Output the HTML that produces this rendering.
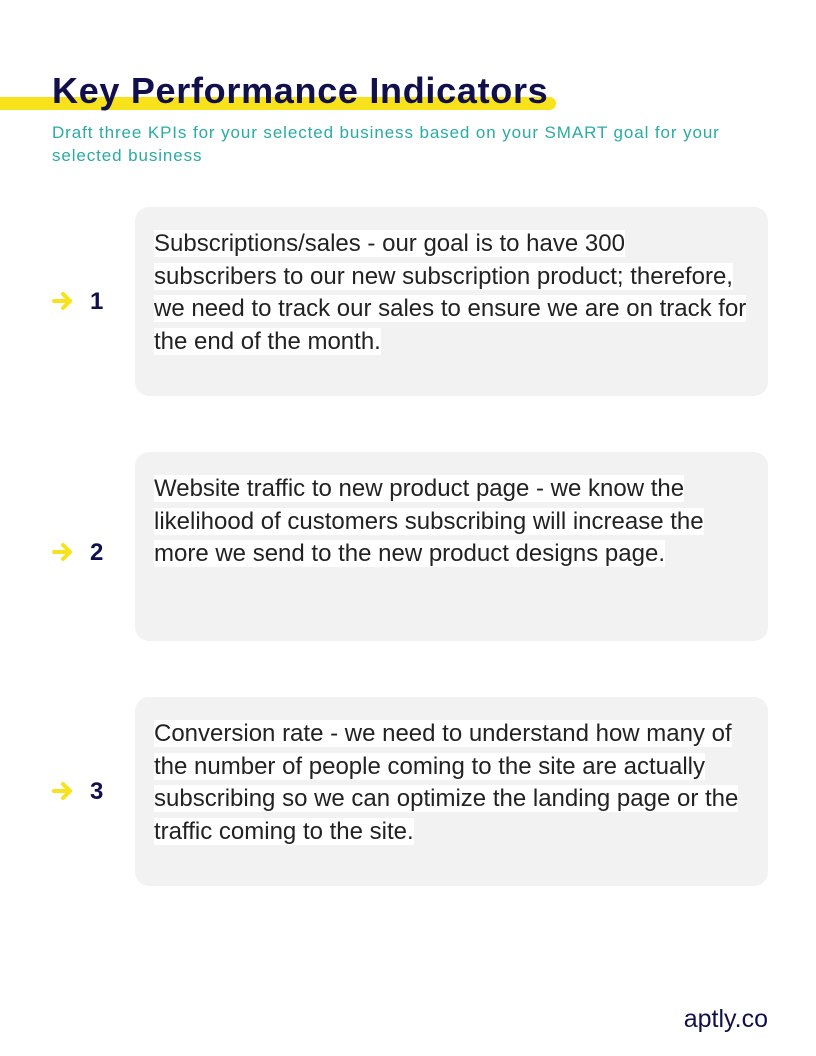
<!DOCTYPE html>
<html><head><style>
body{margin:0;width:816px;height:1056px;background:#fff;position:relative;font-family:"Liberation Sans",Arial,sans-serif;overflow:hidden}
.bar{position:absolute;left:0;top:97px;width:556px;height:13px;background:#f7e21b;border-radius:0 7px 7px 0}
h1{position:absolute;left:52px;top:69px;margin:0;font-size:36px;font-weight:bold;color:#11104a;letter-spacing:0.7px;line-height:44px;white-space:nowrap}
.sub{position:absolute;left:52px;top:121px;width:700px;font-size:17px;letter-spacing:0.9px;line-height:23px;color:#2aaba3}
.box{position:absolute;left:135px;width:633px;height:189px;background:#f2f2f2;border-radius:14px}
.txt{position:absolute;left:19px;top:21px;width:600px;font-size:24px;line-height:32.5px;color:#222}
.txt span{background:#fff;box-decoration-break:clone}
.num{position:absolute;left:52px;font-size:24px;font-weight:bold;color:#11104a;height:30px;line-height:30px}
.num svg{vertical-align:middle;margin-right:16px;margin-top:-4px}
.foot{position:absolute;right:48px;top:1005px;font-size:25px;color:#11104a}
</style></head><body>
<div class="bar"></div>
<h1>Key Performance Indicators</h1>
<div class="sub">Draft three KPIs for your selected business based on your SMART goal for your selected business</div>

<div class="box" style="top:207px"><div class="txt"><span>Subscriptions/sales - our goal is to have 300 subscribers to our new subscription product; therefore, we need to track our sales to ensure we are on track for the end of the month.</span></div></div>
<div class="num" style="top:287px"><svg width="22" height="20" viewBox="0 0 22 20"><path d="M2 10H17M11 3L18 10L11 17" stroke="#f7e21b" stroke-width="4" fill="none" stroke-linecap="round" stroke-linejoin="round"/></svg>1</div>

<div class="box" style="top:452px"><div class="txt"><span>Website traffic to new product page - we know the likelihood of customers subscribing will increase the more we send to the new product designs page.</span></div></div>
<div class="num" style="top:538px"><svg width="22" height="20" viewBox="0 0 22 20"><path d="M2 10H17M11 3L18 10L11 17" stroke="#f7e21b" stroke-width="4" fill="none" stroke-linecap="round" stroke-linejoin="round"/></svg>2</div>

<div class="box" style="top:697px"><div class="txt"><span>Conversion rate - we need to understand how many of the number of people coming to the site are actually subscribing so we can optimize the landing page or the traffic coming to the site.</span></div></div>
<div class="num" style="top:777px"><svg width="22" height="20" viewBox="0 0 22 20"><path d="M2 10H17M11 3L18 10L11 17" stroke="#f7e21b" stroke-width="4" fill="none" stroke-linecap="round" stroke-linejoin="round"/></svg>3</div>

<div class="foot">aptly.co</div>
</body></html>
